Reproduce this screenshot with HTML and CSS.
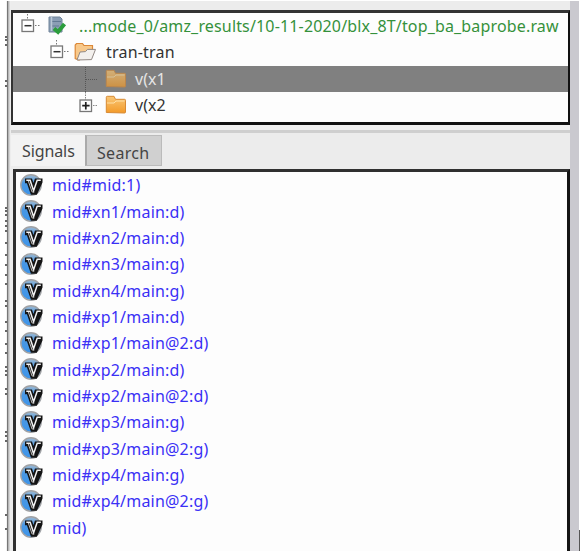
FILE: index.html
```
<!DOCTYPE html>
<html lang="en">
<head>
<meta charset="utf-8">
<title>Signal browser</title>
<link rel="stylesheet" href="styles.css">
</head>
<body>
<svg width="0" height="0" class="defs" aria-hidden="true">
  <defs>
    <linearGradient id="orange" x1="0" y1="0" x2="0" y2="1"><stop offset="0" stop-color="#f9c777"/><stop offset="1" stop-color="#f39a28"/></linearGradient>
    <linearGradient id="ball" x1="0" y1="0" x2="0" y2="1"><stop offset="0" stop-color="#a0bad0"/><stop offset=".4" stop-color="#4a98e4"/><stop offset="1" stop-color="#3c94ea"/></linearGradient>
    <symbol id="minus" viewBox="0 0 20 26"><path d="M7.5 1v6M15 12.5h5" stroke="#777" stroke-dasharray="1.5 1.5" fill="none"/><rect x="2" y="7" width="11.5" height="11.5" fill="#fff" stroke="#777" stroke-width="1.3"/><path d="M4.5 12.7h7" stroke="#333" stroke-width="1.5"/></symbol>
    <symbol id="plus" viewBox="0 0 20 26"><path d="M7.5 0v8M15 13.5h5" stroke="#888" stroke-dasharray="1.5 1" fill="none"/><rect x="2" y="8" width="11.5" height="11.5" fill="#fff" stroke="#777" stroke-width="1.3"/><path d="M4.2 13.7h7.4M7.8 10v7.4" stroke="#222" stroke-width="1.7"/></symbol>
    <symbol id="folder" viewBox="0 0 22 20"><path d="M1.3 17.5V2.3q0-1 1-1H9l1.5 3h9q1 0 1 1V17q0 1-1 1z" fill="url(#orange)" stroke="#d88a34" stroke-width="1"/><path d="M2 8h7l2-2h8.5" fill="none" stroke="#ffe0a6"/></symbol>
    <symbol id="open" viewBox="0 0 23 20"><path d="M1.2 16.5V3L2.5 1.5h6L10 3.5h8.5V8L5 18z" fill="#f8c98b" stroke="#dc8838" stroke-width="1.2"/><path d="M3 18 6 10l5.5-.4 2-2.2h8L17.5 17.6z" fill="#f3f0ed" stroke="#918883"/></symbol>
    <symbol id="v" viewBox="0 0 23 23"><circle cx="11" cy="11" r="10.2" fill="url(#ball)" stroke="#a0a2a5" stroke-width="1.5"/><path d="M5.8 5.3h5.6l2.1 6.2 2-6.2h6.2v3L16.3 20h-4.8L7.5 8.5H5.8z" fill="#141414" stroke="#141414" stroke-width="1.6"/><path d="M6.3 6.3h3.8l3.5 10.4 3.6-10.4h3.6" fill="none" stroke="#f3f3f3" stroke-width="1.5"/><path d="m8.3 7 3.8 11h2.3" fill="none" stroke="#ccc" stroke-width=".9"/></symbol>
  </defs>
</svg>
<div class="window">
  <svg class="edge" viewBox="0 0 6 550" width="6" height="550"><path d="M0 36h3M0 39h3M0 44h3M0 80h3M0 85h3M0 207h3M0 210h3M0 214h3M0 220h3M0 225h3M0 230h3M0 242h3M0 254h3M0 264h3M0 274h3M0 283h3M0 300h3M0 305h3M0 321h3M0 330h3M0 343h3M0 352h3M0 366h3M0 370h3M0 374h3M0 388h3M0 393h3M0 431h3M0 435h3M0 440h3M0 514h3M0 528h3" stroke="#333" stroke-width="1.6"/><path d="M2.7 0v550" stroke="#777" stroke-width="1.6"/><path d="M4 0v550" stroke="#bbb"/></svg>
  <main class="pane">
    <section class="tree">
      <div class="row root"><svg class="box"><use href="#minus"/></svg><svg class="db" viewBox="0 0 20 22"><path d="M2 2h11l2 2v13H2z" fill="#8b9eb5" stroke="#71849a"/><path d="M5 6.5h9M5 11h7" stroke="#637a93"/><path d="M4.5 2v14" stroke="#b9c7d6" stroke-width="1.5"/><path d="m7 13.5 4 3.5 6.5-8" fill="none" stroke="#2b9d3c" stroke-width="4"/></svg><span class="path">...mode_0/amz_results/10-11-2020/blx_8T/top_ba_baprobe.raw</span></div>
      <div class="row tran"><svg class="box"><use href="#minus"/></svg><svg class="open"><use href="#open"/></svg><span>tran-tran</span></div>
      <div class="row leaf selected"><svg class="branch" viewBox="0 0 20 26"><path d="M7.5 1v25M8 13.5h12" stroke="#555" stroke-dasharray="1 1" fill="none"/></svg><svg class="folder"><use href="#folder"/></svg><span>v(x1</span></div>
      <div class="row leaf"><svg class="box"><use href="#plus"/></svg><svg class="folder"><use href="#folder"/></svg><span>v(x2</span></div>
    </section>
    <div class="splitter"></div>
    <nav class="tabs"><div class="tab active">Signals</div><div class="tab search">Search</div></nav>
    <section class="list">
      <div class="signal"><svg><use href="#v"/></svg><span>mid#mid:1)</span></div>
      <div class="signal"><svg><use href="#v"/></svg><span>mid#xn1/main:d)</span></div>
      <div class="signal"><svg><use href="#v"/></svg><span>mid#xn2/main:d)</span></div>
      <div class="signal"><svg><use href="#v"/></svg><span>mid#xn3/main:g)</span></div>
      <div class="signal"><svg><use href="#v"/></svg><span>mid#xn4/main:g)</span></div>
      <div class="signal"><svg><use href="#v"/></svg><span>mid#xp1/main:d)</span></div>
      <div class="signal"><svg><use href="#v"/></svg><span>mid#xp1/main@2:d)</span></div>
      <div class="signal"><svg><use href="#v"/></svg><span>mid#xp2/main:d)</span></div>
      <div class="signal"><svg><use href="#v"/></svg><span>mid#xp2/main@2:d)</span></div>
      <div class="signal"><svg><use href="#v"/></svg><span>mid#xp3/main:g)</span></div>
      <div class="signal"><svg><use href="#v"/></svg><span>mid#xp3/main@2:g)</span></div>
      <div class="signal"><svg><use href="#v"/></svg><span>mid#xp4/main:g)</span></div>
      <div class="signal"><svg><use href="#v"/></svg><span>mid#xp4/main@2:g)</span></div>
      <div class="signal"><svg><use href="#v"/></svg><span>mid)</span></div>
    </section>
  </main>
  <div class="gutter"></div>
  <div class="corner"></div>
</div>
</body>
</html>
```

FILE: styles.css
```
* { box-sizing: border-box; }
body { margin: 0; background: #fff; font: 16px/26px "Noto Sans", "Open Sans", sans-serif; overflow: hidden; }
svg { display: block; flex: none; }
.defs { position: absolute; }
.window { display: flex; width: 576px; height: 550px; margin: 1px 0 0 5px; }
.edge { background: linear-gradient(90deg, #fff 2px, #ededed 2px); }
.pane { width: 559px; height: 550px; background: #ececec; display: flex; flex-direction: column; }
.tree { height: 115px; margin-top: 9px; border: 2px solid #111; border-width: 3px 2px 3px 2px; border-color: #333 #111 #111 #333; background: #fdfdfd; flex: none; }
.row { display: flex; align-items: center; height: 26.3px; color: #333; white-space: nowrap; }
.root { padding-left: 7px; }
.tran { padding-left: 36px; letter-spacing: .2px; }
.leaf { padding-left: 65px; }
.box, .branch { width: 20px; height: 26px; }
.db { width: 20px; height: 22px; margin-left: 7px; margin-right: 12px; }
.path { color: #35913b; letter-spacing: .16px; }
.open { width: 23px; height: 20px; margin: 0 9px 0 5px; }
.folder { width: 22px; height: 20px; margin: 0 8px 0 7px; }
.selected { background: #808080; color: #e5e5e5; }
.selected .folder { opacity: .68; }
.splitter { flex: none; height: 10px; background: linear-gradient(#f0f0f0 5px, #cfcfcf 5px, #cfcfcf 8px, #ececec 8px); }
.tabs { flex: none; display: flex; height: 34px; padding-bottom: 3px; color: #444; }
.tab { height: 31px; line-height: 33px; padding-left: 11px; width: 74px; background: #f3f3f3; letter-spacing: -.1px; }
.search { width: 77px; background: #d0d0d0; border: 1px solid #bbb; border-left: 2px solid #aaa; line-height: 34px; padding-left: 10px; letter-spacing: .3px; }
.list { flex: 1; margin-left: 2px; border: solid #303030; border-width: 3px 3px 0; border-right-color: #151515; background: #fdfdfd; overflow: hidden; }
.signal { display: flex; align-items: center; height: 26.37px; padding-left: 4px; color: #3a30f5; white-space: nowrap; letter-spacing: .2px; }
.signal svg { width: 23px; height: 23px; margin-right: 9px; }
.gutter { width: 9px; height: 550px; background: #cac9cf; }
.corner { width: 1px; height: 21px; margin-top: 529px; background: #555; }
```
